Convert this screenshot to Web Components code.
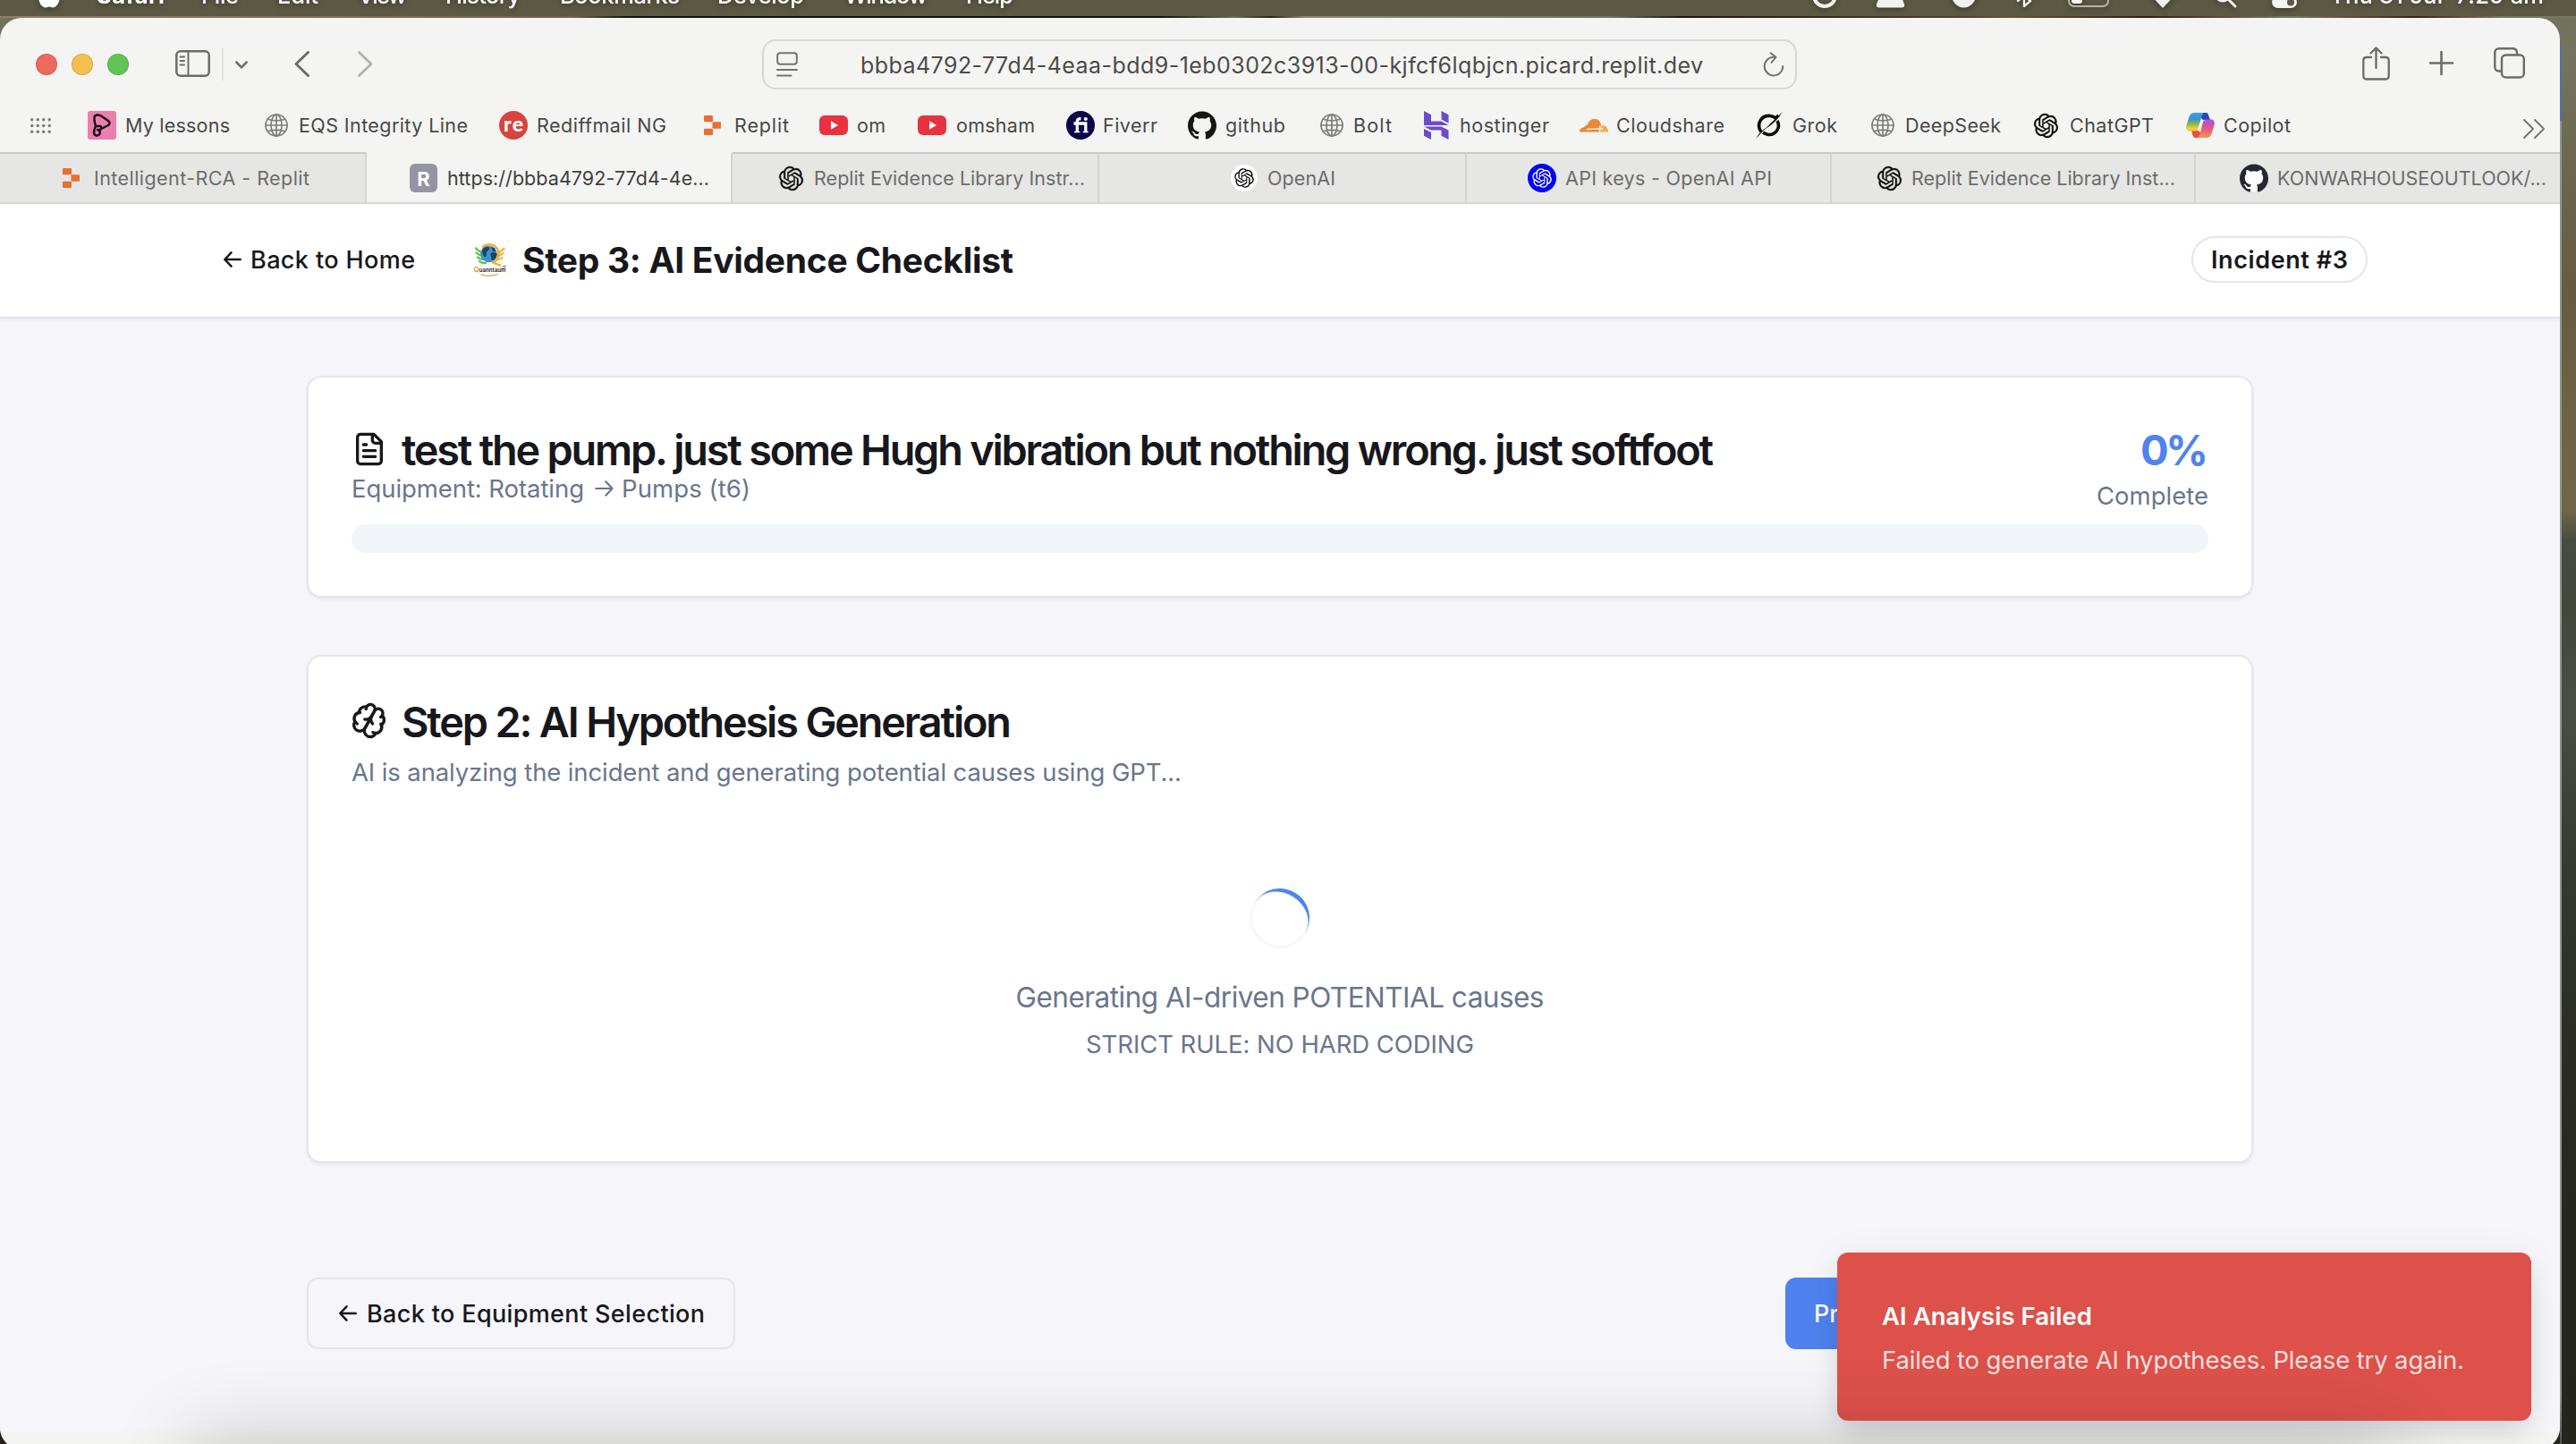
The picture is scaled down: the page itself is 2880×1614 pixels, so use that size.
<!DOCTYPE html>
<html lang="en">
<head>
<meta charset="utf-8">
<title>Step 3: AI Evidence Checklist</title>
<style>
html,body{margin:0;padding:0}
body{width:2880px;height:1614px;overflow:hidden;font-family:Inter,"Liberation Sans",sans-serif;
background:linear-gradient(180deg,#6f7059 0,#747460 60px,#6a664e 200px,#655c42 330px,#6f6545 500px,#6f6646 570px,#464c41 605px,#43483d 680px,#4a4e45 790px,#363a31 960px,#2c2e26 1150px,#26271f 1350px,#24251d 1614px)}
</style>
</head>
<body>
<desktop-screen></desktop-screen>
<script>
const OPENAI='M22.2819 9.8211a5.9847 5.9847 0 0 0-.5157-4.9108 6.0462 6.0462 0 0 0-6.5098-2.9A6.0651 6.0651 0 0 0 4.9807 4.1818a5.9847 5.9847 0 0 0-3.9977 2.9 6.0462 6.0462 0 0 0 .7427 7.0966 5.98 5.98 0 0 0 .511 4.9107 6.051 6.051 0 0 0 6.5146 2.9001A5.9847 5.9847 0 0 0 13.2599 24a6.0557 6.0557 0 0 0 5.7718-4.2058 5.9894 5.9894 0 0 0 3.9977-2.9001 6.0557 6.0557 0 0 0-.7475-7.0729zm-9.022 12.6081a4.4755 4.4755 0 0 1-2.8764-1.0408l.1419-.0804 4.7783-2.7582a.7948.7948 0 0 0 .3927-.6813v-6.7369l2.02 1.1686a.071.071 0 0 1 .038.052v5.5826a4.504 4.504 0 0 1-4.4945 4.4944zm-9.6607-4.1254a4.4708 4.4708 0 0 1-.5346-3.0137l.142.0852 4.783 2.7582a.7712.7712 0 0 0 .7806 0l5.8428-3.3685v2.3324a.0804.0804 0 0 1-.0332.0615L9.74 19.9502a4.4992 4.4992 0 0 1-6.1408-1.6464zM2.3408 7.8956a4.485 4.485 0 0 1 2.3655-1.9728V11.6a.7664.7664 0 0 0 .3879.6765l5.8144 3.3543-2.0201 1.1685a.0757.0757 0 0 1-.071 0l-4.8303-2.7865A4.504 4.504 0 0 1 2.3408 7.872zm16.5963 3.8558L13.1038 8.364 15.1192 7.2a.0757.0757 0 0 1 .071 0l4.8303 2.7913a4.4944 4.4944 0 0 1-.6765 8.1042v-5.6772a.79.79 0 0 0-.407-.667zm2.0107-3.0231l-.142-.0852-4.7735-2.7818a.7759.7759 0 0 0-.7854 0L9.409 9.2297V6.8974a.0662.0662 0 0 1 .0284-.0615l4.8303-2.7866a4.4992 4.4992 0 0 1 6.6802 4.66zM8.3065 12.863l-2.02-1.1638a.0804.0804 0 0 1-.038-.0567V6.0742a4.4992 4.4992 0 0 1 7.3757-3.4537l-.142.0805L8.704 5.459a.7948.7948 0 0 0-.3927.6813zm1.0976-2.3654l2.602-1.4998 2.6069 1.4998v2.9994l-2.5974 1.4997-2.6067-1.4997Z';
const GITHUB='M12 .297c-6.63 0-12 5.373-12 12 0 5.303 3.438 9.8 8.205 11.385.6.113.82-.258.82-.577 0-.285-.01-1.04-.015-2.04-3.338.724-4.042-1.61-4.042-1.61C4.422 18.07 3.633 17.7 3.633 17.7c-1.087-.744.084-.729.084-.729 1.205.084 1.838 1.236 1.838 1.236 1.07 1.835 2.809 1.305 3.495.998.108-.776.417-1.305.76-1.605-2.665-.3-5.466-1.332-5.466-5.93 0-1.31.465-2.38 1.235-3.22-.135-.303-.54-1.523.105-3.176 0 0 1.005-.322 3.3 1.23.96-.267 1.98-.399 3-.405 1.02.006 2.04.138 3 .405 2.28-1.552 3.285-1.23 3.285-1.23.645 1.653.24 2.873.12 3.176.765.84 1.23 1.91 1.23 3.22 0 4.61-2.805 5.625-5.475 5.92.42.36.81 1.096.81 2.22 0 1.606-.015 2.896-.015 3.286 0 .315.21.69.825.57C20.565 22.092 24 17.592 24 12.297c0-6.627-5.373-12-12-12';
const line=(w,c='#6b6b69')=>`fill="none" stroke="${c}" stroke-width="${w}" stroke-linecap="round" stroke-linejoin="round"`;
/* name: [viewBox width, viewBox height, markup] */
const ICONS={
 grid:[23,17,[1.7,8.2,14.7,21.2].map(x=>[1.7,8.5,15.3].map(y=>`<circle cx="${x}" cy="${y}" r="1.7" fill="#7b7b79"/>`).join('')).join('')],
 lessons:[32,32,`<rect width="32" height="32" rx="3" fill="#ee7eb0"/><path d="M8 5.5C10 4 13 4.500 15 5.500L23 11C25 12.500 25 14.500 23 16L14 20.500M8 5.500C6.500 9 8 13.500 9 17C8 19 7 21 7 24.500C7.500 28 12 28.500 13.500 25.500C14.500 23 13 21.500 11 21M9 17H14.500C16 18.500 15 21 13 22" ${line(2.5,'#181018')}/>`],
 globe:[26,26,`<g ${line(1.7,'#7d7d7b')}><circle cx="13" cy="13" r="12"/><ellipse cx="13" cy="13" rx="6" ry="12"/><path d="M13 1v24M1 13h24M3.500 6.200Q13 9.500 22.500 6.200M3.500 19.800Q13 16.500 22.500 19.800"/></g>`],
 rediff:[32,32,`<circle cx="16" cy="16" r="16" fill="#d9433f"/><text x="16" y="22.500" font-family="Lato,sans-serif" font-weight="900" font-size="23" fill="#fff" text-anchor="middle" textLength="22">re</text>`],
 replit:[19,22,`<g fill="#e66f31"><rect width="10" height="7.300" rx="1.200"/><rect x="9.500" y="7.300" width="9.500" height="7.400" rx="1.200"/><rect y="14.700" width="10" height="7.300" rx="1.200"/></g>`],
 youtube:[32,22,`<rect width="32" height="22" rx="6" fill="#e9323f"/><path d="M13 6.300v9.400l8-4.700z" fill="#fff"/>`],
 fiverr:[32,32,`<circle cx="16" cy="16" r="16" fill="#0d0649"/><path d="M8.500 14H21.800V24M12.300 24V12C12.300 9.300 13.500 8.700 16.500 8.700" fill="none" stroke="#fff" stroke-width="3.300"/><path d="M9 23.500h6.500M18.700 23.500h6" stroke="#fff" stroke-width="1.600"/><circle cx="21.800" cy="9" r="2.100" fill="#fff"/>`],
 github:[24,24,`<path d="${GITHUB}" fill="#161616"/>`],
 githubTab:[24,24,`<circle cx="12" cy="12" r="11.500" fill="#fff"/><path d="${GITHUB}" fill="#24292f"/>`],
 hostinger:[28,32,`<path d="M0 0l8 4.300v7.200h11.500L27.500 16H0zM19.500 0l8 4.300v9.500l-8-4.300zM0 17.500h19.500L27.500 21.500V32l-8-4.300v-6.200H8L0 17.500zM0 20l8 4v8L0 27.700z" fill="#6b4bcc"/>`],
 cloud:[32,15,`<path d="M0 14.500C0 11 2 9.500 5 9.500C6 7.500 7 7 8.500 7C10 2 13 0 17 0C21 0 23.500 3 24 7L22 14.500z" fill="#e8883a"/><path d="M22 14.500L25 7C29.500 7 32 10 32 14.500z" fill="#f0ac50"/><path d="M8 11.500L20 11M22.500 7.500v7M19 11h7" stroke="#fff3e4" stroke-width="1.300" fill="none"/>`],
 grok:[30,30,`<path d="M6 22.500C0 14 6 3.500 16 4.500C19 4.800 21 6 22 7L25.500 4M24 10C28.500 18 21.500 27 13 25.200C11 24.800 9.500 24 8 23" fill="none" stroke="#0c0c0c" stroke-width="3.600"/><path d="M0 30C5 22 8 20 12 17.500L21 8.500L30 0C25 7 21 13 10 19.500z" fill="#0c0c0c"/>`],
 openai:[24,24,`<path d="${OPENAI}" fill="#0c0c0c" stroke="#0c0c0c" stroke-width=".3"/>`],
 openaiWhite:[30,30,`<circle cx="15" cy="15" r="15" fill="#fff"/><path transform="translate(4.200 4.200) scale(.9)" d="${OPENAI}" fill="#0c0c0c"/>`],
 openaiBlue:[32,32,`<circle cx="16" cy="16" r="16" fill="#0000f5"/><path transform="translate(5.200 5.200) scale(.9)" d="${OPENAI}" fill="#fff"/>`],
 copilot:[32,28,`<defs><linearGradient id="a" x1="0" y1="0" x2="0" y2="1"><stop offset="0" stop-color="#3fa3ea"/><stop offset=".35" stop-color="#3a8fd0"/><stop offset=".62" stop-color="#8cba4c"/><stop offset=".85" stop-color="#f2cb3c"/></linearGradient><linearGradient id="b" x1="0" y1="0" x2="0" y2="1"><stop offset="0" stop-color="#a259e8"/><stop offset=".5" stop-color="#e4557f"/><stop offset="1" stop-color="#f59a4c"/></linearGradient></defs><path d="M17 0h5c2.500 0 3 2 3.700 4.500L27 8h-7c-2 0-3-2-3.500-4z" fill="#2747c2"/><path d="M15 28h-4c-2.500 0-3.500-2-4-4.500L6 20h7c2 0 3 2 3.500 4z" fill="#e8503f"/><path d="M9.500 0H21c-2.500 0-3.300 3-4.200 6.500L14 16c-.8 3-2 4.500-4.500 4.500H4C1 20.500-.5 18 .3 14.500L3.500 4.500C4.500 1.500 6 0 9.500 0z" fill="url(#a)"/><path d="M22.500 28H12c2.500 0 3.300-3 4.200-6.500L18.500 12c.8-3 2-4.500 4.500-4.500h5c3 0 4.500 2.500 3.700 6L28.500 23.500c-1 3-2.500 4.500-6 4.500z" fill="url(#b)"/>`],
 letterR:[31,32,`<rect width="31" height="32" rx="6" fill="#9594a2"/><text x="15.500" y="24.500" font-family="Inter,sans-serif" font-weight="700" font-size="22" fill="#fff" text-anchor="middle" textLength="14">R</text>`],
 more:[24,22,`<path d="M1 1l10 10L1 21M13 1l10 10L13 21" ${line(1.9,'#737371')}/>`],
 sidebar:[39,30,`<rect x="1.300" y="1.300" width="36.400" height="27.400" rx="4.500" ${line(2.5)}/><path d="M14.500 1v28M5.500 7.500h4.500M5.500 12h4.500M5.500 16.500h4.500" ${line(2)}/>`],
 chevron:[14,9,`<path d="M1.300 1.500L7 7.300l5.700-5.800" ${line(2.500)}/>`],
 back:[17,29,`<path d="M15.500 1.500L2 14.500l13.500 13" ${line(3)}/>`],
 fwd:[17,29,`<path d="M1.500 1.500L15 14.500l-13.500 13" ${line(3,'#b3b3b1')}/>`],
 reader:[24,28,`<rect x="1.200" y="1.200" width="21.600" height="12.500" rx="3" ${line(2,'#737371')}/><path d="M1 20h22M1 26.500h15.500" ${line(2,'#737371')}/>`],
 reload:[24,28,`<path d="M12.500 5.800A10.300 10.300 0 1 0 22.300 16M8.500 1.200l6 4.700-5 6" ${line(2,'#737371')}/>`],
 share:[31,38,`<path d="M10 12H5C2.500 12 1.300 13.500 1.300 15.500V32.500C1.300 35 2.500 36.500 5 36.500H26C28.500 36.500 29.700 35 29.700 32.500V15.500C29.700 13.500 28.500 12 26 12H21M15.500 24V2M9.500 7.500l6-6 6 6" ${line(2.300)}/>`],
 plus:[27,27,`<path d="M13.500 1v25M1 13.500h25" ${line(2.600)}/>`],
 tabs:[35,35,`<path d="M8 26.500H6C3 26.500 1.300 25 1.300 22V6C1.300 3 3 1.300 6 1.300H21C24 1.300 26 3 26 6V8" ${line(2.400)}/><rect x="9" y="8.500" width="24.800" height="25" rx="4.500" ${line(2.400)}/>`],
 arrowL:[20,18,`<path d="M1.300 9H18.700M8.500 1.300L1.300 9l7.200 7.700" ${line(2.500,'#18181c')}/>`],
 arrowR:[21,18,`<path d="M1.300 9H19.300M12.300 1.300L19.500 9l-7.200 7.700" ${line(2.200,'#69768d')}/>`],
 file:[24,24,`<g ${line(2,'#17171c')}><path d="M15 2H6a2 2 0 0 0-2 2v16a2 2 0 0 0 2 2h12a2 2 0 0 0 2-2V7Z"/><path d="M14 2v4a2 2 0 0 0 2 2h4M10 9H8M16 13H8M16 17H8"/></g>`],
 brain:[24,24,`<g transform="rotate(29 12 12)" ${line(2,'#17171c')}><path d="M12 5a3 3 0 1 0-5.997.125 4 4 0 0 0-2.526 5.770 4 4 0 0 0 .556 6.588A4 4 0 1 0 12 18Z"/><path d="M12 5a3 3 0 1 1 5.997.125 4 4 0 0 1 2.526 5.770 4 4 0 0 1-.556 6.588A4 4 0 1 1 12 18Z"/><path d="M15 13a4.500 4.500 0 0 1-3-4 4.500 4.500 0 0 1-3 4M17.599 6.500a3 3 0 0 0 .399-1.375M6.003 5.125A3 3 0 0 0 6.401 6.500M3.477 10.896a4 4 0 0 1 .585-.396M19.938 10.500a4 4 0 0 1 .585.396M6 18a4 4 0 0 1-1.967-.516M19.967 17.484A4 4 0 0 1 18 18"/></g>`],
 logo:[40,40,`<rect width="40" height="40" fill="#fffdfa"/><path d="M4 7.500C6 10.500 8 10.500 10 12M4.500 12.500C7 15 8.500 15 11 16M6 17.500C8 19.500 9.500 19.500 12 20M8 22C10 24 12 24 15 24" ${line(2.200,'#57bd55')}/><path d="M35.500 8C33 10.500 31 11 29.500 12M34.500 13C32.500 15 30.500 15 29 16M33.500 18C31 20 30 20 28 20" ${line(2.200,'#efb13b')}/><path d="M12 6A10.500 10.500 0 1 1 23 23.500L31 26.500" ${line(2.400,'#f1a92f')}/><circle cx="18.500" cy="14" r="9.300" fill="#3f93c8"/><path d="M11 9c3-4 7-4 8-2s-2 3-3 5 1 4-1 5-4-3-4-8zM20 14c2-3 5-2 7-1s-1 8-4 8-1-4-3-7zM21 6l4 1 1 4-3 0z" fill="#1f4464"/><text x="1.500" y="34" font-family="Inter,sans-serif" font-weight="600" font-size="6" textLength="36" lengthAdjust="spacingAndGlyphs" fill="#222"><tspan fill="#e09a33" font-size="8">Q</tspan>uanntaum</text><path d="M10 37Q20 40 28 36.500M31 30.500Q35 30 37 27M34 27.500l3-.5-.5 3" ${line(1,'#c98a4a')}/>`],
 apple:[26,30,`<path d="M13 8C6 5 1 10 1 17s4 12.500 8 12.500c2 0 2.500-1 4-1s2 1 4 1c4 0 8-6 8-12.500S20 5 13 8z" fill="#fff"/>`],
 m1:[28,28,`<circle cx="14" cy="14" r="12" fill="none" stroke="#f2f2ee" stroke-width="4"/>`],
 m2:[34,28,`<path d="M10 0h14l9 24q1 4-3 4H4q-4 0-3-4z" fill="#f2f2ee"/>`],
 m3:[30,28,`<ellipse cx="15" cy="13" rx="14" ry="15" fill="#f2f2ee"/>`],
 m4:[18,28,`<path d="M1 8l14 12-7 6V2l7 6L1 20" ${line(2.400,'#f2f2ee')}/>`],
 m5:[46,24,`<rect x="1" y="1" width="44" height="22" rx="6" ${line(2,'#b5b4a6')}/><rect x="4" y="4" width="12" height="16" rx="3" fill="#f2f2ee"/>`],
 m6:[34,26,`<path d="M0 8Q17-8 34 8L17 26z" fill="#f2f2ee"/>`],
 m7:[26,26,`<circle cx="10" cy="10" r="8" ${line(3,'#f2f2ee')}/><path d="M16 16l8 8" ${line(3,'#f2f2ee')}/>`],
 m8:[28,28,`<rect y="15" width="28" height="13" rx="6.500" fill="#f2f2ee"/><circle cx="21" cy="21.500" r="4" fill="#5b5944"/>`],
};
const define=(name,html,after)=>customElements.define(name,class extends HTMLElement{
 constructor(){super();this.attachShadow({mode:'open'})}
 connectedCallback(){if(this.shadowRoot.firstChild)return;
  this.shadowRoot.innerHTML=typeof html==='function'?html(this):html;
  if(after)after(this)}
});
/* <ui-icon name w h>: one inline SVG drawn to a given box */
define('ui-icon',el=>{const [vw,vh,m]=ICONS[el.getAttribute('name')];
 const w=el.getAttribute('w')||vw,h=el.getAttribute('h')||vh;
 return `<style>:host{display:block;flex:none;width:${w}px;height:${h}px}svg{display:block;overflow:visible}</style><svg width="${w}" height="${h}" viewBox="0 0 ${vw} ${vh}">${m}</svg>`});
/* <fit-text w>: a single line tracked so that it fills exactly w pixels */
define('fit-text',el=>`<style>:host{display:block;flex:none;white-space:nowrap;width:${el.getAttribute('w')}px}</style><span><slot></slot></span>`,el=>{
 const span=el.shadowRoot.querySelector('span');
 const w=+el.getAttribute('w');span.style.letterSpacing='0px';
 const n=[...el.textContent].length,nat=span.getBoundingClientRect().width;
 span.style.letterSpacing=((w-nat)/Math.max(1,n-1))+'px';
});
/* lays out [icon, iconX, iconW, iconH, text, textX, textEnd] entries in one flex run */
const run=(items,start=0)=>{let cur=start;return items.map(([ic,ix,iw,ih,t,tx,te])=>{let s='';
 if(ic){s+=`<ui-icon name="${ic}" w="${iw}" h="${ih}" style="margin-left:${ix-cur}px"></ui-icon>`;cur=ix+iw}
 if(t){s+=`<fit-text w="${te-tx}" style="margin-left:${tx-cur}px">${t}</fit-text>`;cur=te}
 return s}).join('')};

define('menu-bar',`<style>:host{display:flex;height:18px;overflow:hidden;background:#5b5944;color:#fff;font-size:25.500px;font-weight:500;line-height:32px}
.in{display:flex;align-items:flex-end;flex:none;height:32px;margin-top:-21.500px;filter:drop-shadow(0 2px 3px rgba(0,0,0,.35))}
fit-text{height:32px}ui-icon{margin-bottom:2px}fit-text:nth-of-type(1){font-weight:700}</style>
<div class="in">${run([['apple',42,26,30,'Safari',108,184],['',0,0,0,'File',225,267],['',0,0,0,'Edit',310,356],['',0,0,0,'View',400,455],['',0,0,0,'History',498,582],['',0,0,0,'Bookmarks',626,760],['',0,0,0,'Develop',802,899],['',0,0,0,'Window',944,1037],['',0,0,0,'Help',1080,1133],['m1',2026,28,28],['m2',2097,33,28],['m3',2181,29,28],['m4',2255,18,28],['m5',2312,46,26],['m6',2401,34,26],['m7',2475,26,26],['m8',2540,28,28,'Thu 31 Jul&nbsp; 7:29 am',2605,2844]])}</div>`);

define('tool-bar',`<style>:host{display:flex;align-items:center;height:104px;font-size:25px;color:#4b4b49}
.l{width:24px;height:24px;border-radius:50%;box-sizing:border-box;border:1px solid rgba(0,0,0,.12);margin-right:16px;flex:none}
.sep{width:2px;height:36px;background:#e3e3e1;margin:0 13px 0 13px}
.url{display:flex;align-items:center;box-sizing:border-box;width:1157px;height:56px;border:2px solid #d7d7d5;border-radius:15px;padding:0 12px 0 14px;margin-left:435px}</style>
<i class="l" style="margin-left:40px;background:#ed6a5f"></i><i class="l" style="background:#f5bf4f"></i><i class="l" style="background:#61c555"></i>
<ui-icon name="sidebar" style="margin-left:36px;margin-top:-2px"></ui-icon><i class="sep"></i><ui-icon name="chevron"></ui-icon>
<ui-icon name="back" style="margin-left:52px;margin-top:-2px"></ui-icon><ui-icon name="fwd" style="margin-left:54px;margin-top:-2px"></ui-icon>
<div class="url"><ui-icon name="reader"></ui-icon><fit-text w="942" style="margin-left:70px;margin-top:2px">bbba4792-77d4-4eaa-bdd9-1eb0302c3913-00-kjfcf6lqbjcn.picard.replit.dev</fit-text><ui-icon name="reload" style="margin-left:auto"></ui-icon></div>
<ui-icon name="share" style="margin-left:632px;margin-top:-3px"></ui-icon><ui-icon name="plus" style="margin-left:44px;margin-top:-3px"></ui-icon><ui-icon name="tabs" style="margin-left:45px;margin-top:-3px"></ui-icon>`);

define('bookmarks-bar',`<style>:host{display:flex;align-items:center;height:32px;padding-bottom:14px;font-size:21.500px;color:#484846}
fit-text{margin-top:-1px}ui-icon[name=more]{margin-top:8px}</style>${run([['grid',34,23,17],
['lessons',98,32,32,'My lessons',140,257],['globe',296,26,26,'EQS Integrity Line',334,523],['rediff',558,32,32,'Rediffmail NG',600,745],['replit',787,19,22,'Replit',821,882],['youtube',916,32,22,'om',958,990],['youtube',1026,32,22,'omsham',1069,1157],['fiverr',1192,32,32,'Fiverr',1233,1294],['github',1328,32,32,'github',1370,1437],['globe',1476,26,26,'Bolt',1513,1556],['hostinger',1592,28,32,'hostinger',1632,1732],['cloud',1766,32,15,'Cloudshare',1807,1928],['grok',1963,30,30,'Grok',2004,2054],['globe',2092,26,26,'DeepSeek',2130,2237],['openai',2274,27,27,'ChatGPT',2314,2408],['copilot',2444,32,28,'Copilot',2486,2561],['more',2821,24,22]])}`);

define('browser-tab',`<style>:host{display:flex;align-items:center;box-sizing:border-box;flex:none;height:58px;background:#e6e6e4;color:#6c6c6a;font-size:21.500px;
border-top:2px solid #cacac8;border-bottom:2px solid #d8d8d6;border-right:2px solid #d3d3d1;overflow:hidden}
:host([active]){background:#f4f4f2;border-top-color:#f4f4f2;color:#3f3f3d}:host(:last-child){border-right:0}</style><slot></slot>`);
const tabs=[[0,410,'replit',70,19,22,'Intelligent-RCA - Replit',105,346],[410,819,'letterR',458,31,32,'https://bbba4792-77d4-4e...',500,793],[819,1229,'openai',871,27,27,'Replit Evidence Library Instr...',910,1213],[1229,1640,'openaiWhite',1376,30,30,'OpenAI',1417,1493],[1640,2048,'openaiBlue',1708,32,32,'API keys - OpenAI API',1750,1981],[2048,2455,'openai',2099,27,27,'Replit Evidence Library Inst...',2137,2432],[2455,2862,'githubTab',2504,32,32,'KONWARHOUSEOUTLOOK/...',2546,2847]];
define('tab-strip',`<style>:host{display:flex;height:58px}</style>${tabs.map((t,i)=>`<browser-tab ${i==1?'active':''} style="width:${t[1]-t[0]}px">${run([t.slice(2)],t[0])}</browser-tab>`).join('')}`);

define('page-header',`<style>:host{display:flex;align-items:center;box-sizing:border-box;height:128px;padding:0 215px 2px 250px;background:#fff;border-bottom:2px solid #e1e5eb;box-shadow:0 2px 4px rgba(0,0,0,.05);position:relative;color:#18181c;font-size:27px;font-weight:500}
h1{margin:0 0 0 16px;font-size:39px;font-weight:650}
.badge{margin-left:auto;box-sizing:border-box;height:52px;width:197px;border:2px solid #e2e6ee;border-radius:26px;display:flex;align-items:center;justify-content:center;font-weight:600}</style>
<ui-icon name="arrowL"></ui-icon><fit-text w="184" style="margin-left:10px">Back to Home</fit-text>
<ui-icon name="logo" style="margin-left:64px"></ui-icon><h1><fit-text w="549">Step 3: AI Evidence Checklist</fit-text></h1>
<div class="badge"><fit-text w="153">Incident #3</fit-text></div>`);

define('ui-card',`<style>:host{display:block;box-sizing:border-box;width:2176px;margin:0 auto;padding:56px 48px 48px;background:#fff;border:2px solid #e2e6ec;border-radius:16px;box-shadow:0 2px 4px rgba(0,0,0,.06)}</style><slot></slot>`);

define('incident-summary',`<style>:host{display:block;height:248px}
.row{display:flex;justify-content:space-between;height:102px;color:#69768d;font-size:27.500px}
.t{display:flex;align-items:center;gap:16px;height:50px;color:#17171c;font-size:46.800px;font-weight:600}
.s{display:flex;align-items:center;height:36px}.r{display:flex;flex-direction:column;align-items:flex-end}
.p{display:flex;align-items:center;height:48px;padding-bottom:2px;font-size:47px;font-weight:650;color:#4f83ee}
.bar{height:32px;margin-top:6px;border-radius:16px;background:#f1f5fa}</style>
<ui-card><div class="row"><div><div class="t"><ui-icon name="file" w="40" h="40" style="margin-top:-2px"></ui-icon><fit-text w="1467">test the pump. just some Hugh vibration but nothing wrong. just softfoot</fit-text></div>
<div class="s"><fit-text w="260">Equipment: Rotating</fit-text><ui-icon name="arrowR" style="margin:0 9px 0 12px"></ui-icon><fit-text w="144">Pumps (t6)</fit-text></div></div>
<div class="r"><div class="p"><fit-text w="76">0%</fit-text></div><div class="s" style="height:52px"><fit-text w="125">Complete</fit-text></div></div></div>
<div class="bar"></div></ui-card>`);

define('hypothesis-card',`<style>:host{display:block;margin-top:64px}ui-card{height:568px;padding-top:48px;color:#69768d;font-size:27.500px}
.t{display:flex;align-items:center;gap:16px;height:50px;color:#17171c;font-size:46.800px;font-weight:600}
.d{height:58px;padding-top:2px;line-height:58px}.c{display:flex;flex-direction:column;align-items:center;line-height:40px}
.spin{box-sizing:border-box;width:66px;height:66px;margin:101px 0 36px;border-radius:50%;border:0 solid #4f83ee;border-top-width:5px;transform:rotate(32deg);box-shadow:inset 0 0 0 1px rgba(79,131,238,.16)}</style>
<ui-card><div class="t"><ui-icon name="brain" w="40" h="40" style="margin-top:-4px"></ui-icon><fit-text w="682">Step 2: AI Hypothesis Generation</fit-text></div>
<div class="d"><fit-text w="928">AI is analyzing the incident and generating potential causes using GPT...</fit-text></div>
<div class="c"><div class="spin"></div><fit-text w="591" style="font-size:31.500px;margin-bottom:12px">Generating AI-driven POTENTIAL causes</fit-text><fit-text w="434">STRICT RULE: NO HARD CODING</fit-text></div></ui-card>`);

define('ui-button',`<style>:host{display:flex;align-items:center;box-sizing:border-box;height:80px;border:2px solid #e2e6ee;border-radius:12px;padding:0 34px;color:#18181c;font-size:27px;font-weight:500}
:host([primary]){background:#4f82ee;border-color:#4f82ee;color:#fff;padding:0 30px}</style><slot></slot>`);

define('action-row',`<style>:host{display:flex;justify-content:space-between;width:2176px;margin:128px auto 0}</style>
<ui-button style="width:479px"><ui-icon name="arrowL"></ui-icon><fit-text w="378" style="margin-left:11px">Back to Equipment Selection</fit-text></ui-button>
<ui-button primary style="width:523px">Pr</ui-button>`);

define('toast-message',`<style>:host{display:block;box-sizing:border-box;position:absolute;left:2054px;top:1380px;width:776px;height:188px;padding:50.500px 50px;border-radius:12px;background:#dd514a;color:#fff;font-size:27.500px;line-height:40px;box-shadow:0 18px 32px -6px rgba(0,0,0,.12),0 4px 44px rgba(0,0,0,.06)}
.d{margin-top:9px;color:#f9dfdd}</style><fit-text w="235" style="font-weight:600">AI Analysis Failed</fit-text><div class="d"><fit-text w="651">Failed to generate AI hypotheses. Please try again.</fit-text></div>`);

define('browser-window',`<style>:host{display:block;position:relative;width:2862px;height:1600px;overflow:hidden;border-radius:24px;background:#f4f4f2}
main{height:1372px;background:#f5f5fa}incident-summary{padding-top:64px}
.dock{position:absolute;left:225px;right:205px;top:1602px;height:120px;box-shadow:0 0 90px 14px rgba(0,0,0,.19)}</style>
<tool-bar></tool-bar><bookmarks-bar></bookmarks-bar><tab-strip></tab-strip>
<main><page-header></page-header><incident-summary></incident-summary><hypothesis-card></hypothesis-card><action-row></action-row></main>
<toast-message></toast-message><div class="dock"></div>`);

define('desktop-screen',`<style>:host{display:block;width:2880px;height:1614px;overflow:hidden}
.strip{height:2px;background:linear-gradient(90deg,#8a8265 0,#6d6750 640px,#17130e 700px,#17130e 1300px,#6c6a55 1380px,#2a241a 1420px,#8f8a72 1460px,#6e7468 1800px,#1d150f 1880px,#4b4434 2200px,#6a532f 2250px,#301f12 2400px,#77775f 2560px,#3a2414 2700px,#77775f 2800px)}
.w{display:flex;background:linear-gradient(#24221a,#24221a) left bottom/40px 60px no-repeat}
.edge{width:2px;height:1594px;background:linear-gradient(180deg,transparent 0,transparent 30px,#5272a8 30px,#5272a8 115px,#8f9491 115px,#8f9491 1540px,#555 1594px)}</style>
<menu-bar></menu-bar><div class="strip"></div><div class="w"><browser-window></browser-window><i class="edge"></i></div>`);
</script>
</body>
</html>
